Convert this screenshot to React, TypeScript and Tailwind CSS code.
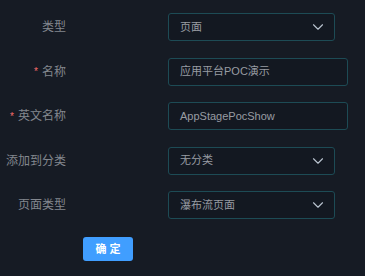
import { ChevronDown } from 'lucide-react';

const font = { fontFamily: '"Liberation Sans", "Noto Sans CJK SC", sans-serif' };

function Label({ text, required }: { text: string; required?: boolean }) {
  return (
    <div className="w-[66px] shrink-0 flex items-center justify-end text-[12px] text-[#83878e] whitespace-nowrap">
      {required && <span className="text-[#f56c6c] mr-[4px] text-[10px]">*</span>}
      {text}
    </div>
  );
}

function Select({ value }: { value: string }) {
  return (
    <div className="w-[167px] h-[28px] flex items-center justify-between pl-[11px] pr-[7px] border border-[#1d4b55] rounded-[3px] bg-[#131821]">
      <span className="text-[11px] text-[#989ca3]">{value}</span>
      <ChevronDown className="w-[18px] h-[18px] text-[#b9c3cf]" strokeWidth={1.5} />
    </div>
  );
}

function Input({ value }: { value: string }) {
  return (
    <div className="w-[180px] h-[28px] flex items-center pl-[11px] border border-[#1d4b55] rounded-[3px] bg-[#131821]">
      <span className="text-[11px] text-[#989ca3]">{value}</span>
    </div>
  );
}

export default function App() {
  return (
    <div className="w-[365px] h-[276px] bg-[#161b24] pt-[13px] flex flex-col gap-[16.5px]" style={font}>
      <div className="flex items-center gap-[102px]">
        <Label text="类型" />
        <Select value="页面" />
      </div>
      <div className="flex items-center gap-[102px]">
        <Label text="名称" required />
        <Input value="应用平台POC演示" />
      </div>
      <div className="flex items-center gap-[102px]">
        <Label text="英文名称" required />
        <Input value="AppStagePocShow" />
      </div>
      <div className="flex items-center gap-[102px]">
        <Label text="添加到分类" />
        <Select value="无分类" />
      </div>
      <div className="flex items-center gap-[102px]">
        <Label text="页面类型" />
        <Select value="瀑布流页面" />
      </div>
      <div className="pl-[83px]">
        <button className="w-[50px] h-[24px] rounded-[3px] bg-[#409eff] text-white text-[11px] font-semibold">
          确 定
        </button>
      </div>
    </div>
  );
}
